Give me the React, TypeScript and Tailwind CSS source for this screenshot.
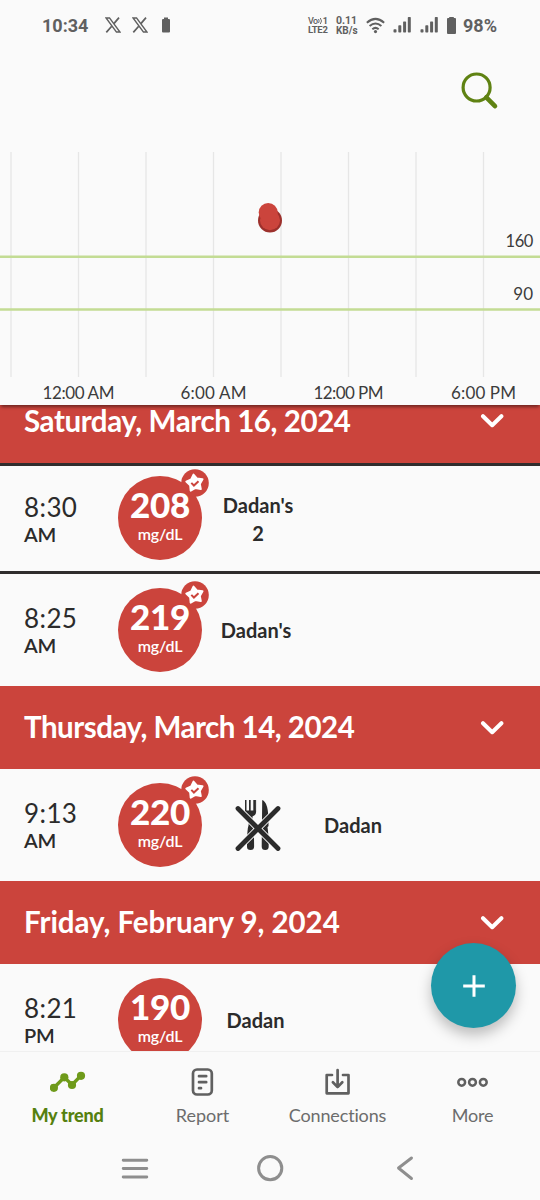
import type { ReactNode } from 'react';

type Reading = {
  time: string;
  period: string;
  value: number;
  starred?: boolean;
  fasting?: boolean;
  note: string[];
  noteClass: string;
};

const saturday: Reading[] = [
  { time: '8:30', period: 'AM', value: 208, starred: true, note: ["Dadan's", '2'], noteClass: 'w-[112px] pt-[2px]' },
  { time: '8:25', period: 'AM', value: 219, starred: true, note: ["Dadan's"], noteClass: 'w-[108px]' },
];

const thursday: Reading = { time: '9:13', period: 'AM', value: 220, starred: true, fasting: true, note: ['Dadan'], noteClass: 'w-[78px]' };
const friday: Reading = { time: '8:21', period: 'PM', value: 190, note: ['Dadan'], noteClass: 'w-[107px]' };

const gridLines = [11, 78.5, 146, 213.5, 281, 348.5, 416, 483.5];

const axisLabels = [
  { x: 78.5, label: '12:00 AM', width: 72 },
  { x: 213.5, label: '6:00 AM', width: 66 },
  { x: 348.5, label: '12:00 PM', width: 70 },
  { x: 483.5, label: '6:00 PM', width: 65 },
];

const XLogo = () => (
  <svg className="w-4 h-4" viewBox="0 0 16 16" fill="none" stroke="#606060">
    <path d="M1 .9h3.5L15 15.1h-3.5z" strokeWidth="1.5" />
    <path d="M14 .6 8.9 6.6M6.7 9.2 1.3 15.4" strokeWidth="1.7" />
  </svg>
);

const Signal = () => (
  <svg className="w-[18px] h-4" viewBox="0 0 18 16" fill="#606060">
    <rect x="0.5" y="12.2" width="3" height="3.3" rx=".7" />
    <rect x="5.3" y="8.2" width="3" height="7.3" rx=".7" />
    <rect x="10.1" y="4.4" width="3" height="11.1" rx=".7" />
    <rect x="14.8" y="0" width="3" height="15.5" rx=".7" />
  </svg>
);

const StatusBar = () => (
  <div className="flex items-center h-[50px] pl-[42px] text-[#606060] font-['Roboto',sans-serif] font-bold whitespace-nowrap">
    <span className="w-[63px] text-[18px]">10:34</span>
    <div className="flex gap-[11px]">
      <XLogo />
      <XLogo />
    </div>
    <svg className="ml-[14px] w-2 h-4" viewBox="0 0 8 16" fill="#606060">
      <path d="M2 .5h4V2h1q1 0 1 1v11.500q0 1-1 1H1q-1 0-1-1V3q0-1 1-1h1z" />
    </svg>
    <div className="flex flex-col gap-px ml-[138px] w-[28px] text-[9px] leading-[8px] font-medium">
      <div className="flex items-center h-2">
        <span className="tracking-[-0.5px]">Vo</span>
        <svg className="w-[5px] h-2" viewBox="0 0 5 8" fill="none" stroke="#606060" strokeWidth=".9">
          <path d="M.5 2q1.4 2 0 4M2.3 1q2.4 3 0 6" />
        </svg>
        <span className="font-bold">1</span>
      </div>
      <div className="text-[9.5px] font-bold tracking-[-0.3px]">LTE2</div>
    </div>
    <div className="flex flex-col gap-px w-[30px] text-[10.5px] leading-[9px]">
      <div>0.11</div>
      <div className="text-[10px]">KB/s</div>
    </div>
    <svg className="w-[19px] h-[17px]" viewBox="0 0 18 16" fill="none" stroke="#606060" strokeWidth="1.9">
      <path d="M.8 5.3q8.2-7.2 16.4 0M3.4 8.5q5.6-4.8 11.2 0M6 11.5q3-2.5 6 0" />
      <circle cx="9" cy="13.8" r="1.5" fill="#606060" stroke="none" />
    </svg>
    <div className="flex gap-[9px] ml-[8px]">
      <Signal />
      <Signal />
    </div>
    <svg className="ml-[9px] w-[9px] h-[17px]" viewBox="0 0 9 17" fill="#606060">
      <path d="M2.2 0h4.6v1H8q1 0 1 1v14q0 1-1 1H1q-1 0-1-1V2q0-1 1-1h1.2z" />
    </svg>
    <span className="ml-[7px] text-[18px]">98%</span>
  </div>
);

const TrendChart = () => (
  <svg className="block w-[540px] h-[255px]" viewBox="0 150 540 255" fontFamily="Lato, sans-serif" fontSize="17" fill="#3c3c3c">
    {gridLines.map((x) => (
      <line key={x} x1={x} x2={x} y1="152" y2="377" stroke="#e6e6e6" strokeWidth="1.3" />
    ))}
    <path d="M0 256.7h540M0 309.6h540" stroke="#c3dc94" strokeWidth="2.5" />
    <text x="533" y="247" textAnchor="end" fontSize="16.5" letterSpacing="-.4">160</text>
    <text x="533" y="300" textAnchor="end">90</text>
    {axisLabels.map(({ x, label, width }) => (
      <text key={label} x={x} y="399" textAnchor="middle" textLength={width}>{label}</text>
    ))}
    <circle cx="270" cy="220.6" r="12" fill="#9c302c" />
    <circle cx="270" cy="220.2" r="10" fill="#cb443c" />
    <circle cx="268.2" cy="212.5" r="9.5" fill="#cb443c" />
  </svg>
);

const DayHeader = ({ className, children }: { className: string; children: ReactNode }) => (
  <div className="flex items-center justify-between shrink-0 h-[83.5px] pl-6 pr-9 bg-[#cb443c] text-white">
    <h2 className={`text-[29.5px] leading-[30px] font-bold whitespace-nowrap ${className}`}>{children}</h2>
    <svg className="w-6 h-4 mt-px" viewBox="0 0 24 16" fill="none" stroke="currentColor" strokeWidth="4" strokeLinecap="round" strokeLinejoin="round">
      <path d="m3 3.2 9.2 9L21.4 3.2" />
    </svg>
  </div>
);

const StarBadge = () => (
  <svg className="absolute -top-[7px] -right-[7px] w-7 h-7" viewBox="0 0 28 28">
    <circle cx="14" cy="14" r="13.8" fill="#cb443c" />
    <path
      d="M12.5 5.6 16 9.6l5.5.6-2.7 4.7 1 5.2-5.300-1.200-4.800 2.700-.5-5.300L5.300 12.600l4.900-2.200z"
      fill="#fff"
      stroke="#fff"
      strokeWidth="2"
      strokeLinejoin="round"
    />
    <path d="m10.300 13.900 2.600 2.600 4.600-4.300" fill="none" stroke="#cb443c" strokeWidth="2" />
  </svg>
);

const FastingIcon = () => (
  <svg className="w-[46px] h-[52px]" viewBox="0 0 46 52" fill="#2b2b2b">
    <path d="M10 1h1.5v10.5H14V1h1.7v10.5h2.6V1H20v10.5h.1V1h1v12q0 3.5-3.6 4.5V26q1.6 4 1.6 21.5 0 3.5-3.6 3.5T12 47.5Q12 30 13.6 26v-8.5Q10 16.5 10 13z" />
    <path d="M27.2 1Q33.5 3 33.5 23v4q-.5 1-1 1 1.2 8 1.2 19.500 0 3.500-3.500 3.500t-3.500-3.500z" />
    <path d="m3 9.500 40 40M43 9.500l-40 40" stroke="#fafafa" strokeWidth="6.600" />
    <path d="m3 9.500 40 40M43 9.500l-40 40" stroke="#2b2b2b" strokeWidth="4.800" strokeLinecap="round" />
  </svg>
);

const ReadingRow = ({ reading }: { reading: Reading }) => (
  <div className="flex items-center shrink-0 h-[111.5px] text-[#2b2b2b]">
    <div className="w-[118px] pl-6 pt-[2px]">
      <div className="text-[26px] leading-[28px] tracking-[0.4px] pt-px">{reading.time}</div>
      <div className="text-[20px] leading-[26px] font-semibold tracking-[-0.3px]">{reading.period}</div>
    </div>
    <div className="relative w-[84px] h-[84px] rounded-full bg-[#cb443c] text-white text-center">
      <div className="pt-[6px] text-[35px] leading-[44px] font-black tracking-[-0.3px]">{reading.value}</div>
      <div className="text-[16px] leading-4 font-semibold tracking-[-0.2px]">mg/dL</div>
      {reading.starred && <StarBadge />}
    </div>
    {reading.fasting && (
      <div className="flex justify-center w-[112px]">
        <FastingIcon />
      </div>
    )}
    <div className={`${reading.noteClass} text-center text-[20px] leading-[28px] font-bold`}>
      {reading.note.map((line) => (
        <div key={line}>{line}</div>
      ))}
    </div>
  </div>
);

const TrendIcon = () => (
  <svg className="w-9 h-7" viewBox="0 0 36 28" fill="#6e9a1a" stroke="#6e9a1a">
    <path d="m3.9 19.8 10.4-10.5 7.7 7.5 9-9.2" fill="none" strokeWidth="3.4" />
    <g stroke="none">
      <circle cx="3.9" cy="19.8" r="4.1" />
      <circle cx="14.3" cy="9.3" r="4.1" />
      <circle cx="22" cy="17" r="4.1" />
      <circle cx="31" cy="7.8" r="4.1" />
    </g>
  </svg>
);

const ReportIcon = () => (
  <svg className="w-7 h-7" viewBox="0 0 28 28" fill="none" stroke="#606060" strokeWidth="2.7" strokeLinecap="round">
    <rect x="4" y="1.5" width="18.8" height="25" rx="4" />
    <path d="M10 8.2h7.2M10 14.2h7.2M10 20.2h2" />
  </svg>
);

const ImportIcon = () => (
  <svg className="w-7 h-7" viewBox="0 0 28 28" fill="none" stroke="#606060" strokeWidth="2.7" strokeLinecap="round" strokeLinejoin="round">
    <path d="M8 7H2.7v18.3h21.8V7H19M13.6 2v17M8.9 14.3l4.7 4.8 4.7-4.8" />
  </svg>
);

const MoreIcon = () => (
  <svg className="w-8 h-7" viewBox="0 0 32 28" fill="none" stroke="#606060" strokeWidth="2.5">
    <circle cx="4.7" cy="14.3" r="3.4" />
    <circle cx="15.5" cy="14.3" r="3.4" />
    <circle cx="26.3" cy="14.3" r="3.4" />
  </svg>
);

const tabs = [
  { label: 'My trend', icon: <TrendIcon />, className: 'text-[#55800f] font-black tracking-[-0.2px]' },
  { label: 'Report', icon: <ReportIcon />, className: 'text-[#6c6c6c]' },
  { label: 'Connections', icon: <ImportIcon />, className: 'text-[#6c6c6c] tracking-[-0.15px]' },
  { label: 'More', icon: <MoreIcon />, className: 'text-[#6c6c6c] tracking-[-0.2px]' },
];

const TabBar = () => (
  <nav className="grid grid-cols-4 h-[85px] border-t border-[#f0f0f0] bg-[#fafafa]">
    {tabs.map((tab) => (
      <div key={tab.label} className={`flex flex-col items-center pt-4 text-[18px] ${tab.className}`}>
        {tab.icon}
        <span className="mt-[7px] leading-6">{tab.label}</span>
      </div>
    ))}
  </nav>
);

const SystemBar = () => (
  <div className="grid grid-cols-3 place-items-center h-16 px-[67.5px]">
    <svg className="w-7 h-7" viewBox="0 0 28 28" stroke="#8e8e8e" strokeWidth="2.9" strokeLinecap="round">
      <path d="M2.2 6.2h23.6M2.2 14.5h23.6M2.2 23h23.6" />
    </svg>
    <svg className="w-7 h-7" viewBox="0 0 28 28" fill="none" stroke="#8e8e8e" strokeWidth="3">
      <circle cx="14.2" cy="14.2" r="11.6" />
    </svg>
    <svg className="w-7 h-7" viewBox="0 0 28 28" fill="none" stroke="#8e8e8e" strokeWidth="2.9" strokeLinecap="round" strokeLinejoin="round">
      <path d="M20.5 4 7.5 14l13 10.5" />
    </svg>
  </div>
);

export default function App() {
  return (
    <div className="relative flex flex-col w-[540px] h-[1200px] overflow-hidden bg-[#fafafa] font-['Lato',sans-serif]">
      <StatusBar />
      <header className="flex justify-end h-[100px] pt-[21px] pr-[41px]">
        <svg className="w-[40px] h-[40px]" viewBox="0 0 40 40" fill="none" stroke="#5f8212" strokeLinecap="round">
          <circle cx="17.6" cy="16.5" r="13.5" strokeWidth="3.2" />
          <path d="m27.3 26.3 8.7 8.9" strokeWidth="4.6" />
        </svg>
      </header>
      <div className="relative z-10 bg-[#fafafa] shadow-[0_3px_3px_-1px_rgba(0,0,0,0.45)]">
        <TrendChart />
      </div>

      <main className="flex flex-col justify-end h-[646px] overflow-hidden">
        <DayHeader className="tracking-[-0.42px]">Saturday, March 16, 2024</DayHeader>
        {/* the newest reading is outlined */}
        <div className="flex flex-col justify-center shrink-0 h-[111.5px] border-y-[3px] border-[#302d2d]">
          <ReadingRow reading={saturday[0]} />
        </div>
        <ReadingRow reading={saturday[1]} />
        <DayHeader className="tracking-[-0.5px]">Thursday, March 14, 2024</DayHeader>
        <ReadingRow reading={thursday} />
        <DayHeader className="tracking-[-0.05px]">Friday, February 9, 2024</DayHeader>
        <div className="shrink-0 h-[87px]">
          <ReadingRow reading={friday} />
        </div>
      </main>

      <TabBar />
      <SystemBar />

      <button className="absolute left-[431px] top-[943px] flex items-center justify-center w-[85px] h-[85px] rounded-full bg-[#1f98a8] shadow-[0_7px_14px_rgba(0,0,0,0.25)]">
        <svg className="w-6 h-6" viewBox="0 0 24 24" stroke="#fff" strokeWidth="3">
          <path d="M12 1.2v21.6M1.2 12h21.6" />
        </svg>
      </button>
    </div>
  );
}
